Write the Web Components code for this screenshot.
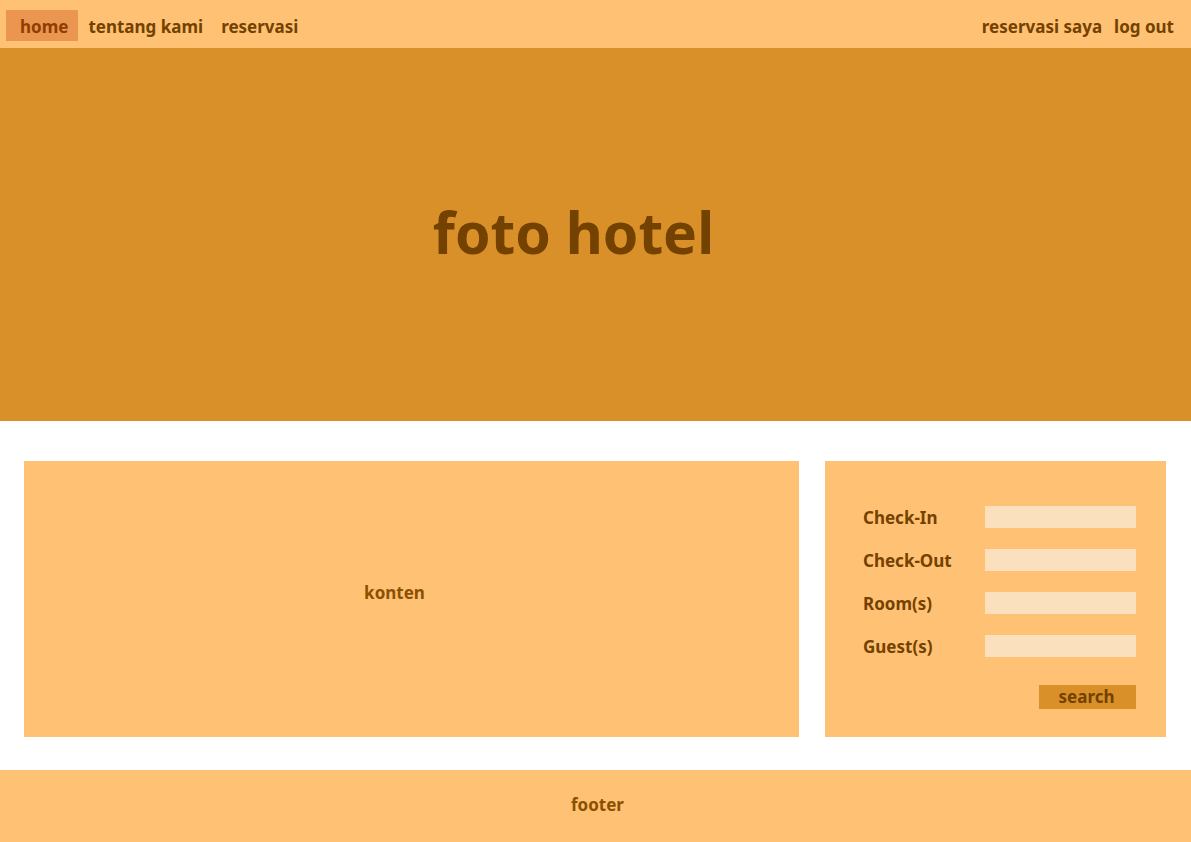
<!DOCTYPE html>
<html lang="id">
<head>
<meta charset="utf-8">
<meta name="viewport" content="width=device-width, initial-scale=1">
<title>Hotel</title>
<style>
  body {
    margin: 0;
    background: #fff;
    color: #734100;
    font: 700 17px/24px "Noto Sans", "Open Sans", sans-serif;
    --panel: #ffc173;
    --accent: #da9028;
    --field: #fbe0bd;
    --muted: #8b5000;
  }
</style>
</head>
<body>
<hotel-page></hotel-page>

<template id="page-template">
  <style>
    :host { display: flex; flex-direction: column; min-height: 100vh; }
    main {
      display: grid;
      grid-template-columns: minmax(0, 775fr) minmax(320px, 341fr);
      gap: 26px;
      padding: 40px 25px 33px 24px;
    }
  </style>
  <site-nav>
    <nav-link href="#home" current>home</nav-link>
    <nav-link href="#tentang">tentang kami</nav-link>
    <nav-link href="#reservasi">reservasi</nav-link>
    <nav-link slot="account" href="#saya">reservasi saya</nav-link>
    <nav-link slot="account" href="#logout">log out</nav-link>
  </site-nav>
  <hero-banner>foto hotel</hero-banner>
  <main>
    <content-panel>konten</content-panel>
    <booking-form></booking-form>
  </main>
  <site-footer>footer</site-footer>
</template>

<template id="nav-template">
  <style>
    :host { display: block; background: var(--panel); }
    nav {
      display: flex; justify-content: space-between; align-items: center;
      box-sizing: border-box; min-height: 48px; padding: 3px 7px 0 6px;
    }
    div { display: flex; align-items: center; }
  </style>
  <nav>
    <div><slot></slot></div>
    <div><slot name="account"></slot></div>
  </nav>
</template>

<template id="link-template">
  <style>
    :host { display: block; }
    a { display: block; padding: 5px 8px 2px 10px; color: inherit; text-decoration: none; white-space: nowrap; }
    :host([current]) a { padding-left: 14px; padding-right: 10px; background: #eb9650; color: #8f3d00; }
    :host([slot="account"]) a { padding-left: 2px; padding-right: 10px; }
  </style>
  <a><slot></slot></a>
</template>

<template id="hero-template">
  <style>
    :host {
      display: flex; justify-content: center; align-items: center;
      box-sizing: border-box; min-height: 373px; padding: 0 44px 6px 0;
      background: var(--accent);
    }
    h1 { margin: 0; font-size: 57px; line-height: 80px; }
  </style>
  <h1><slot></slot></h1>
</template>

<template id="content-template">
  <style>
    :host {
      display: flex; justify-content: center; align-items: center;
      padding: 0 34px 12px 0; background: var(--panel); color: var(--muted);
    }
    p { margin: 0; }
  </style>
  <p><slot></slot></p>
</template>

<template id="booking-template">
  <style>
    :host { display: block; background: var(--panel); }
    form { display: grid; gap: 21px; padding: 45px 30px 28px 38px; }
    .row { display: grid; grid-template-columns: 1fr 151px; align-items: start; height: 22px; }
    input {
      box-sizing: border-box; width: 100%; height: 22px; margin: 0; padding: 0 6px;
      border: 0; border-radius: 0; background: var(--field); color: inherit;
      font: inherit; font-size: 14px;
    }
    button {
      justify-self: end; width: 97px; height: 24px; margin-top: 7px; padding: 0 2px 0 0;
      border: 0; background: var(--accent); color: inherit; font: inherit; line-height: 24px;
    }
  </style>
  <form>
    <div class="row"><label for="in">Check-In</label><input id="in" type="text"></div>
    <div class="row"><label for="out">Check-Out</label><input id="out" type="text"></div>
    <div class="row"><label for="rooms">Room(s)</label><input id="rooms" type="text"></div>
    <div class="row"><label for="guests">Guest(s)</label><input id="guests" type="text"></div>
    <button type="button">search</button>
  </form>
</template>

<template id="footer-template">
  <style>
    :host { display: block; flex: 1; background: var(--panel); color: var(--muted); }
    footer { padding: 23px 20px 25px 24px; text-align: center; }
  </style>
  <footer><slot></slot></footer>
</template>

<script>
  class TemplateElement extends HTMLElement {
    constructor() {
      super();
      const template = document.getElementById(this.constructor.template);
      this.attachShadow({ mode: "open" }).append(template.content.cloneNode(true));
    }
  }
  class NavLink extends TemplateElement {
    static template = "link-template";
    connectedCallback() {
      const link = this.shadowRoot.querySelector("a");
      link.href = this.getAttribute("href");
      if (this.hasAttribute("current")) link.setAttribute("aria-current", "page");
    }
  }
  class SiteNav extends TemplateElement { static template = "nav-template"; }
  class HeroBanner extends TemplateElement { static template = "hero-template"; }
  class ContentPanel extends TemplateElement { static template = "content-template"; }
  class BookingForm extends TemplateElement { static template = "booking-template"; }
  class SiteFooter extends TemplateElement { static template = "footer-template"; }
  class HotelPage extends TemplateElement { static template = "page-template"; }

  customElements.define("nav-link", NavLink);
  customElements.define("site-nav", SiteNav);
  customElements.define("hero-banner", HeroBanner);
  customElements.define("content-panel", ContentPanel);
  customElements.define("booking-form", BookingForm);
  customElements.define("site-footer", SiteFooter);
  customElements.define("hotel-page", HotelPage);
</script>
</body>
</html>
